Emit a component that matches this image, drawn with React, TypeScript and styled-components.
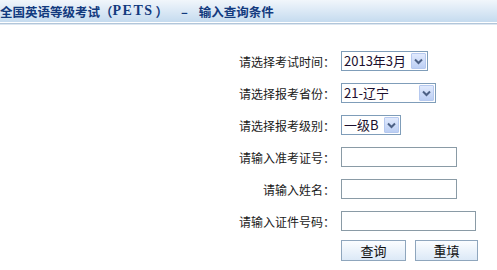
import styled, { createGlobalStyle } from 'styled-components'

const GlobalStyle = createGlobalStyle`
  html, body {
    margin: 0;
    padding: 0;
    background: #ffffff;
  }
  body {
    font-family: "Noto Sans CJK SC", "Liberation Sans", sans-serif;
    font-size: 12px;
    color: #1a1a1a;
  }
`

const Page = styled.div`
  width: 497px;
  height: 270px;
  overflow: hidden;
`

const TitleBar = styled.div`
  height: 22px;
  display: flex;
  align-items: center;
  background: linear-gradient(#f1f6fb, #c5dbef);
  border-bottom: 1px solid #ffffff;
  box-shadow: 0 1px 0 #b2c6da, 0 2px 0 #dde7f1;
`

const Title = styled.h1`
  margin: 0;
  font-size: 12.5px;
  font-weight: 700;
  color: #123a7e;
  white-space: nowrap;
  display: flex;
  align-items: center;
`

const Latin = styled.span`
  font-family: "Liberation Serif", serif;
  font-size: 14px;
  letter-spacing: 1.5px;
  margin-right: 2px;
`

const Dash = styled.span`
  margin: 0 11px 0 13px;
`

const Form = styled.div`
  display: grid;
  grid-template-columns: 338px 1fr;
  grid-auto-rows: 32px;
  padding-top: 22px;
`

const Label = styled.div`
  display: flex;
  align-items: center;
  justify-content: flex-end;
  padding-right: 3px;
  font-size: 12px;
  color: #1a1a1a;
  white-space: nowrap;
`

const Cell = styled.div<{ $top?: boolean }>`
  display: flex;
  align-items: ${(p) => (p.$top ? 'flex-start' : 'center')};
  padding-left: 3px;
  padding-top: ${(p) => (p.$top ? '3px' : '0')};
  gap: 9px;
`

const SelectBox = styled.div<{ $w: number }>`
  box-sizing: border-box;
  width: ${(p) => p.$w}px;
  height: 20px;
  border: 1px solid #7f9db9;
  background: #fff;
  display: flex;
  align-items: center;
  justify-content: space-between;
  padding: 1px 1px 1px 2px;
`

const SelectValue = styled.span`
  font-size: 13px;
  color: #1c0f2e;
  white-space: nowrap;
  line-height: 16px;
`

const ArrowButton = styled.span`
  box-sizing: border-box;
  width: 15px;
  height: 16px;
  border: 1px solid #b6c9ef;
  border-radius: 1px;
  background: linear-gradient(#e1eafd, #bccff4);
  display: flex;
  align-items: center;
  justify-content: center;
`

const TextInput = styled.input<{ $w: number }>`
  box-sizing: border-box;
  width: ${(p) => p.$w}px;
  height: 20px;
  border: 1px solid #8a9ba6;
  background: #fff;
  padding: 0 2px;
  font-size: 12px;
  outline: none;
`

const Button = styled.button<{ $w: number }>`
  box-sizing: border-box;
  width: ${(p) => p.$w}px;
  height: 21px;
  border: 1px solid #8fa6bd;
  background: linear-gradient(#fbfdff, #dce9f7);
  font-family: "Noto Sans CJK SC", sans-serif;
  font-size: 13px;
  color: #111;
  padding: 0;
  line-height: 19px;
`

const Chevron = () => (
  <svg width="9" height="7" viewBox="0 0 9 7">
    <path d="M1 1.5 L4.5 5 L8 1.5" fill="none" stroke="#4d6185" strokeWidth="2" />
  </svg>
)

const Select = ({ value, width }: { value: string; width: number }) => (
  <SelectBox $w={width}>
    <SelectValue>{value}</SelectValue>
    <ArrowButton>
      <Chevron />
    </ArrowButton>
  </SelectBox>
)

export default function App() {
  return (
    <Page>
      <GlobalStyle />
      <TitleBar>
        <Title>
          全国英语等级考试（<Latin>PETS</Latin>）<Dash>–</Dash>输入查询条件
        </Title>
      </TitleBar>
      <Form>
        <Label>请选择考试时间：</Label>
        <Cell>
          <Select value="2013年3月" width={87} />
        </Cell>
        <Label>请选择报考省份：</Label>
        <Cell>
          <Select value="21-辽宁" width={95} />
        </Cell>
        <Label>请选择报考级别：</Label>
        <Cell>
          <Select value="一级B" width={60} />
        </Cell>
        <Label>请输入准考证号：</Label>
        <Cell>
          <TextInput $w={116} />
        </Cell>
        <Label>请输入姓名：</Label>
        <Cell>
          <TextInput $w={116} />
        </Cell>
        <Label>请输入证件号码：</Label>
        <Cell>
          <TextInput $w={135} />
        </Cell>
        <Label />
        <Cell $top>
          <Button $w={65}>查询</Button>
          <Button $w={63}>重填</Button>
        </Cell>
      </Form>
    </Page>
  )
}
